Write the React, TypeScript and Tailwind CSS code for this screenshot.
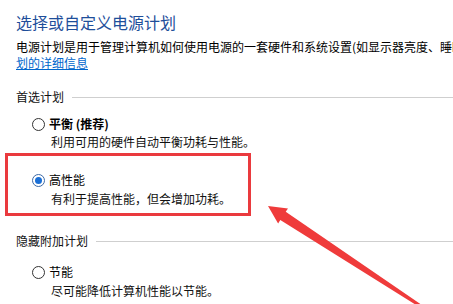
import React from "react";

const Radio = ({ checked }: { checked?: boolean }) => (
  <span
    className={`flex h-[13px] w-[13px] shrink-0 items-center justify-center rounded-full border bg-white ${
      checked ? "border-[#3d6aa6]" : "border-[#333333]"
    }`}
  >
    {checked && <span className="h-[7px] w-[7px] rounded-full bg-[#1a6fd6]" />}
  </span>
);

const GroupHeader = ({ label, className }: { label: string; className?: string }) => (
  <div className={`flex h-[16px] items-center gap-[8px] ${className ?? ""}`}>
    <span className="whitespace-nowrap text-[12px] leading-[16px] text-[#111]">{label}</span>
    <div className="h-px flex-1 bg-[#cfcfcf]" />
  </div>
);

const Plan = ({
  name,
  desc,
  checked,
  bold,
  className,
  descClass,
}: {
  name: string;
  desc: string;
  checked?: boolean;
  bold?: boolean;
  className?: string;
  descClass?: string;
}) => (
  <div className={`pl-[32px] ${className ?? ""}`}>
    <div className="flex h-[16px] items-center gap-[4px]">
      <Radio checked={checked} />
      <span className={`text-[12px] leading-[16px] text-black ${bold ? "font-bold" : ""}`}>{name}</span>
    </div>
    <p className={`pl-[19px] text-[12px] leading-[16px] whitespace-nowrap text-[#111] ${descClass ?? ""}`}>{desc}</p>
  </div>
);

export default function App() {
  return (
    <div
      className="relative h-[304px] w-[453px] overflow-hidden bg-white"
      style={{ fontFamily: '"Noto Sans CJK SC", "Noto Sans", sans-serif' }}
    >
      <div className="pl-[16px]">
        <h1 className="mt-[12px] whitespace-nowrap text-[16px] leading-[20px] text-[#1e4e9a]">选择或自定义电源计划</h1>
        <p className="mt-[7px] whitespace-nowrap text-[12px] leading-[16px] text-black">
          电源计划是用于管理计算机如何使用电源的一套硬件和系统设置(如显示器亮度、睡眠等)
        </p>
        <a className="block text-[12px] leading-[16px] text-[#0066cc] underline">划的详细信息</a>

        <GroupHeader label="首选计划" className="mt-[18px]" />
      </div>

      <Plan name="平衡 (推荐)" bold desc="利用可用的硬件自动平衡功耗与性能。" className="mt-[11px]" descClass="mt-[2px]" />
      <Plan name="高性能" checked desc="有利于提高性能，但会增加功耗。" className="mt-[22px]" descClass="mt-[3px]" />

      <div className="pl-[16px]">
        <GroupHeader label="隐藏附加计划" className="mt-[26px]" />
      </div>

      <Plan name="节能" desc="尽可能降低计算机性能以节能。" className="mt-[15px]" descClass="mt-[3px]" />

      {/* annotation overlay */}
      <div className="pointer-events-none absolute left-[5px] top-[153px] h-[63px] w-[246px] border-[3px] border-[#ea3a3e]" />
      <svg className="pointer-events-none absolute left-0 top-0" width="453" height="304" viewBox="0 0 453 304">
        <polygon
          points="268,206 288,208.4 285.7,211.7 421.4,304.7 419.8,307.3 280.3,220.1 278.1,223.4"
          fill="#ef3b3b"
        />
      </svg>
    </div>
  );
}
